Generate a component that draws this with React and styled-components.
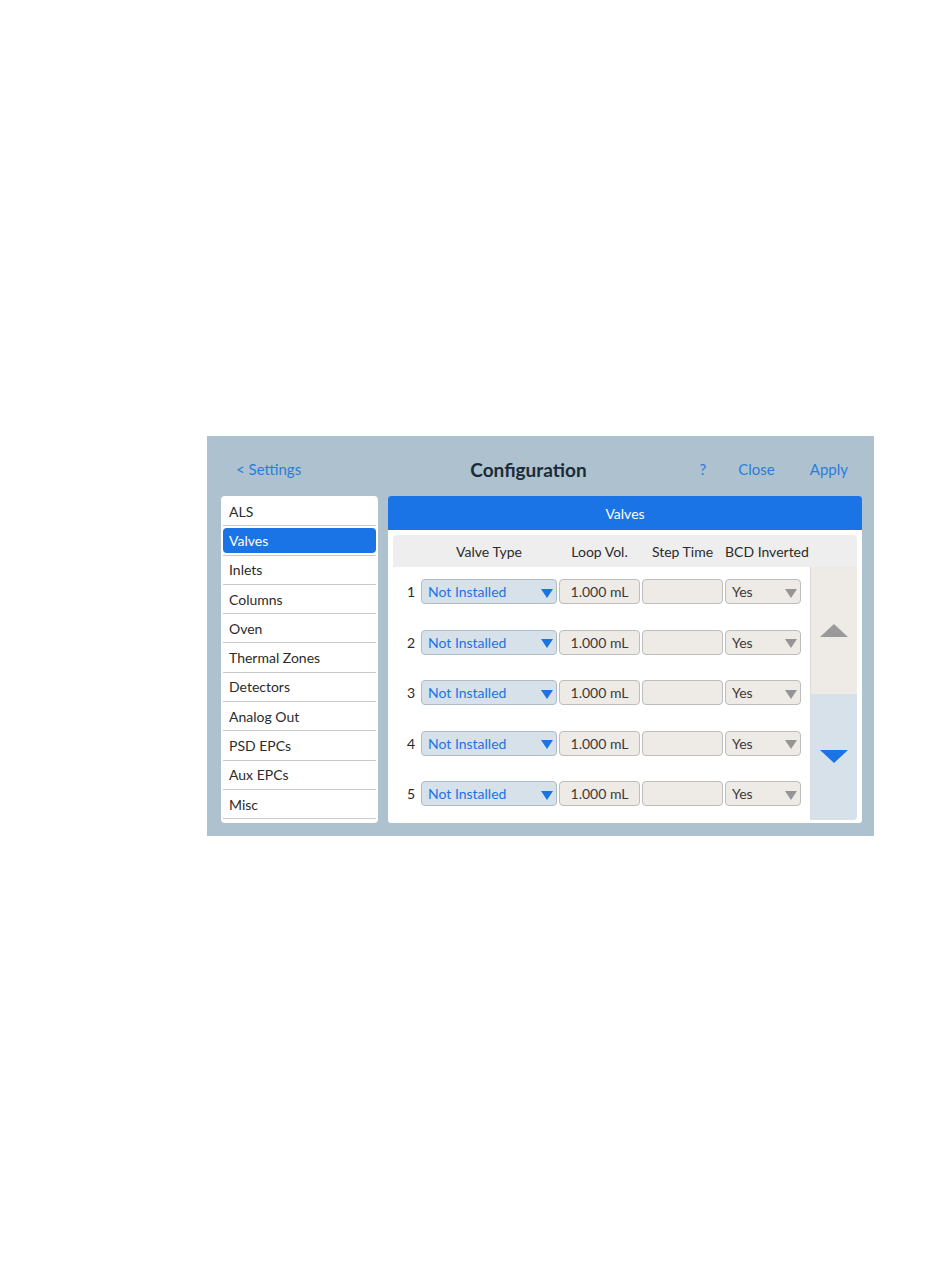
import styled, { createGlobalStyle } from "styled-components";

const GlobalStyle = createGlobalStyle`
  body {
    margin: 0;
    background: #ffffff;
    font-family: Lato, "Open Sans", sans-serif;
  }
`;

const menu = [
  "ALS", "Valves", "Inlets", "Columns", "Oven", "Thermal Zones",
  "Detectors", "Analog Out", "PSD EPCs", "Aux EPCs", "Misc",
];

const rows = [1, 2, 3, 4, 5];

const Caret = ({ color, w = 12, h = 9 }) => (
  <svg width={w} height={h} viewBox="0 0 12 9">
    <polygon points="0,0 12,0 6,9" fill={color} />
  </svg>
);

export default function App() {
  return (
    <>
      <GlobalStyle />
      <Panel>
        <Header>
          <Link>&lt; Settings</Link>
          <Title>Configuration</Title>
          <Actions>
            <Link $gap={32}>?</Link>
            <Link $gap={35}>Close</Link>
            <Link>Apply</Link>
          </Actions>
        </Header>
        <Body>
          <SideList>
            {menu.map((m) => (
              <SideItem key={m} $active={m === "Valves"}>
                <span>{m}</span>
              </SideItem>
            ))}
          </SideList>
          <Content>
            <ContentTitle>Valves</ContentTitle>
            <Table>
              <HeadRow>
                <span />
                <HeadCell>Valve Type</HeadCell>
                <HeadCell>Loop Vol.</HeadCell>
                <HeadCell>Step Time</HeadCell>
                <HeadCell>BCD Inverted</HeadCell>
              </HeadRow>
              <TableBody>
                <Rows>
                  {rows.map((n) => (
                    <Row key={n}>
                      <RowNum>{n}</RowNum>
                      <Select>
                        <span>Not Installed</span>
                        <Caret color="#1a74e6" />
                      </Select>
                      <Field>1.000 mL</Field>
                      <Field />
                      <YesSelect>
                        <span>Yes</span>
                        <Caret color="#959595" />
                      </YesSelect>
                    </Row>
                  ))}
                </Rows>
                <Scroller>
                  <ScrollBtn $tone="up">
                    <svg width="28" height="13" viewBox="0 0 28 13">
                      <polygon points="0,13 28,13 14,0" fill="#9a9a9a" />
                    </svg>
                  </ScrollBtn>
                  <ScrollBtn $tone="down">
                    <svg width="28" height="13" viewBox="0 0 28 13">
                      <polygon points="0,0 28,0 14,13" fill="#1a74e6" />
                    </svg>
                  </ScrollBtn>
                </Scroller>
              </TableBody>
            </Table>
          </Content>
        </Body>
      </Panel>
    </>
  );
}

const Panel = styled.div`
  margin: 436px 0 0 207px;
  width: 667px;
  height: 400px;
  box-sizing: border-box;
  background: #adc2ce;
  padding: 0 12px 13px 14px;
  display: flex;
  flex-direction: column;
`;

const Header = styled.div`
  flex-shrink: 0;
  height: 60px;
  display: flex;
  align-items: center;
  padding: 6px 14px 0 15px;
  box-sizing: border-box;
  position: relative;
`;

const Link = styled.div`
  color: #2a7ddc;
  font-size: 15px;
  margin-right: ${(p) => (p.$gap ? `${p.$gap}px` : "0")};
`;

const Title = styled.div`
  position: absolute;
  left: 0;
  right: 0;
  top: 6px;
  bottom: 0;
  display: flex;
  align-items: center;
  justify-content: center;
  font-size: 19px;
  font-weight: 700;
  color: #1c2b39;
  pointer-events: none;
  padding-right: 26px;
`;

const Actions = styled.div`
  margin-left: auto;
  display: flex;
  align-items: center;
`;

const Body = styled.div`
  flex: 1;
  min-height: 0;
  display: flex;
  gap: 10px;
`;

const SideList = styled.div`
  width: 157px;
  background: #ffffff;
  border-radius: 4px;
  padding: 1px 2px;
  box-sizing: border-box;
`;

const SideItem = styled.div`
  height: 29.3px;
  box-sizing: border-box;
  border-bottom: 1px solid #c9c9c9;
  padding: ${(p) => (p.$active ? "2px 0" : "0")};
  font-size: 14px;
  color: #2b2b2b;
  display: flex;
  span {
    flex: 1;
    display: flex;
    align-items: center;
    padding-left: 6px;
    border-radius: 4px;
    background: ${(p) => (p.$active ? "#1a74e6" : "transparent")};
    color: ${(p) => (p.$active ? "#ffffff" : "#2b2b2b")};
  }
`;

const Content = styled.div`
  width: 474px;
  background: #ffffff;
  border-radius: 3px;
  display: flex;
  flex-direction: column;
  overflow: hidden;
`;

const ContentTitle = styled.div`
  flex-shrink: 0;
  height: 34px;
  background: #1a74e6;
  color: #ffffff;
  font-size: 14px;
  display: flex;
  align-items: center;
  justify-content: center;
`;

const Table = styled.div`
  margin: 5px 5px 3px 5px;
  flex: 1;
  min-height: 0;
  display: flex;
  flex-direction: column;
  border-radius: 4px;
  background: #eeeeee;
  overflow: hidden;
`;

const cols = "26px 136px 81px 81px 76px";

const HeadRow = styled.div`
  flex-shrink: 0;
  height: 32px;
  display: grid;
  grid-template-columns: ${cols};
  column-gap: 2px;
  align-items: center;
`;

const HeadCell = styled.div`
  font-size: 14px;
  color: #2b2b2b;
  text-align: center;
  white-space: nowrap;
`;

const TableBody = styled.div`
  flex: 1;
  min-height: 0;
  display: flex;
  background: #ffffff;
`;

const Rows = styled.div`
  flex: 1;
  display: flex;
  flex-direction: column;
`;

const Row = styled.div`
  height: 50.6px;
  box-sizing: border-box;
  padding-top: 12px;
  display: grid;
  grid-template-columns: ${cols};
  column-gap: 2px;
  align-items: start;
`;

const RowNum = styled.div`
  height: 25px;
  display: flex;
  align-items: center;
  justify-content: flex-end;
  padding-right: 4px;
  font-size: 14px;
  color: #2b2b2b;
`;

const fieldBase = `
  height: 25px;
  box-sizing: border-box;
  border-radius: 4px;
  font-size: 14px;
  display: flex;
  align-items: center;
`;

const Select = styled.div`
  ${fieldBase}
  background: #d6e1ea;
  border: 1px solid #aebcc7;
  color: #1a74e6;
  padding: 0 3px 0 6px;
  justify-content: space-between;
  svg { margin-top: 3px; }
`;

const Field = styled.div`
  ${fieldBase}
  background: #eeebe6;
  border: 1px solid #bdbdbd;
  color: #3a3a3a;
  justify-content: center;
`;

const YesSelect = styled.div`
  ${fieldBase}
  background: #eeebe6;
  border: 1px solid #bdbdbd;
  color: #3a3a3a;
  padding: 0 3px 0 6px;
  justify-content: space-between;
  svg { margin-top: 3px; }
`;

const Scroller = styled.div`
  width: 46px;
  margin-left: 9px;
  display: flex;
  flex-direction: column;
  border-left: 1px solid #dcdcdc;
`;

const ScrollBtn = styled.div`
  flex: 1;
  display: flex;
  align-items: center;
  justify-content: center;
  background: ${(p) => (p.$tone === "up" ? "#eeebe7" : "#d6e1ea")};
`;
